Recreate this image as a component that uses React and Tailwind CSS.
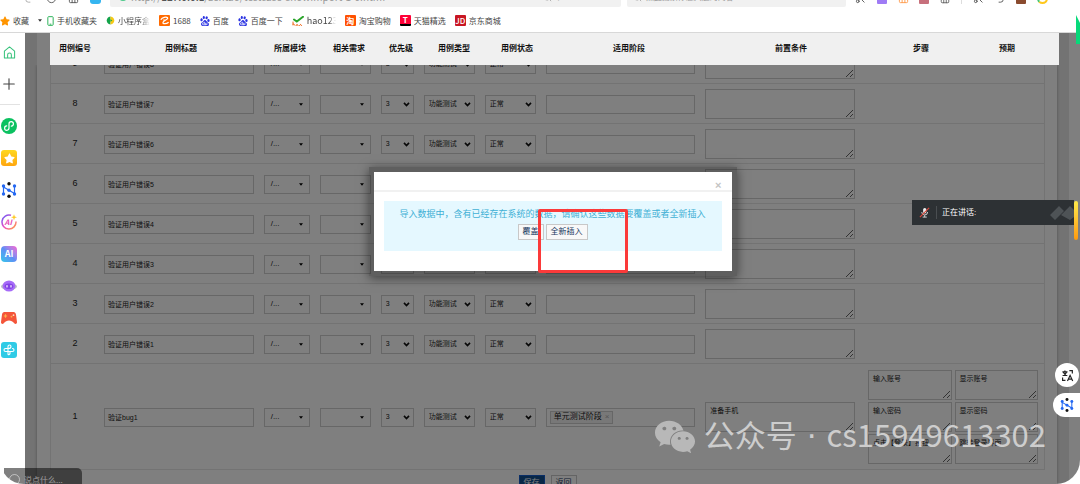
import { useState } from 'react';
import { Home, Plus, RotateCw, Scissors, Search, Undo2 } from 'lucide-react';
import { FaStar, FaWeixin } from 'react-icons/fa';
import { SiBaidu } from 'react-icons/si';

const CASES = [
  { id: 9, title: '验证用户错误8' },
  { id: 8, title: '验证用户错误7' },
  { id: 7, title: '验证用户错误6' },
  { id: 6, title: '验证用户错误5' },
  { id: 5, title: '验证用户错误4' },
  { id: 4, title: '验证用户错误3' },
  { id: 3, title: '验证用户错误2' },
  { id: 2, title: '验证用户错误1' },
  {
    id: 1,
    title: '验证bug1',
    stage: '单元测试阶段',
    precondition: '准备手机',
    steps: [
      ['输入账号', '显示账号'],
      ['输入密码', '显示密码'],
      ['点击【登录】按钮', '跳转登录界面'],
    ],
  },
];

const HEADERS = [
  { label: '用例编号', width: 'w-[50px]' },
  { label: '用例标题', width: '' },
  { label: '所属模块', width: 'w-[56px]' },
  { label: '相关需求', width: 'w-[62px]' },
  { label: '优先级', width: 'w-[42px]' },
  { label: '用例类型', width: 'w-[64px]' },
  { label: '用例状态', width: 'w-[62px]' },
  { label: '适用阶段', width: '' },
  { label: '前置条件', width: '' },
  { label: '步骤', width: 'w-[98px]' },
  { label: '预期', width: 'w-[89px] pr-[15px]' },
];

const FIELD = 'block h-[19px] w-full rounded-none border border-[#cfcfcf] bg-white text-[7px] text-[#222]';
const AREA = 'block h-[30px] w-full resize rounded-none border border-[#cfcfcf] bg-white px-1 py-[3px] text-[7px] leading-[10px] text-[#222]';
const CELL = 'border-b border-[#e6e6e6] px-[5px] pt-[5px] pb-1 align-middle';

function PhoneIcon() {
  return (
    <svg viewBox="0 0 8 12" className="h-[10px] w-[7px]" fill="none" stroke="#2fb35c" strokeWidth="1.2">
      <rect x="0.8" y="0.8" width="6.4" height="10.4" rx="1" />
      <path d="M3 9.8h2" />
    </svg>
  );
}

function LeafIcon() {
  return (
    <svg viewBox="0 0 10 10" className="h-[9px] w-[9px]">
      <path d="M5 .5C2 1 .8 3 .8 5S2 9 5 9.5z" fill="#13a34a" />
      <path d="M5 .5C8 1 9.2 3 9.2 5S8 9 5 9.5z" fill="#f6c915" />
      <path d="M5 3.5l2 1.5-2 1.5z" fill="#13a34a" />
    </svg>
  );
}

function AliIcon() {
  return (
    <svg viewBox="0 0 12 12" className="h-[11px] w-[11px]">
      <rect width="12" height="12" rx="1" fill="#ff6a00" />
      <path d="M2 5.200C3.500 2.500 8 1.500 9.300 3c.8 1.200-1.500 2-3.300 3.200-2 1.400-2.500 3.300.2 3.300 1.800 0 3.300-.8 4.300-1.700" fill="none" stroke="#fff" strokeWidth="1.400" />
      <path d="M4.500 5.500h2" stroke="#fff" />
    </svg>
  );
}

function HaoIcon() {
  return (
    <svg viewBox="0 0 12 10" className="h-[10px] w-[12px]" fill="none" strokeLinecap="round">
      <path d="M2 3.500l2.800 2L11 .8" stroke="#2ba52b" strokeWidth="2" />
      <path d="M1 6v3M1 8q1-1 1.500 1M5 8.500a1 1 0 1 0 .1 0M8.500 8.500a1 1 0 1 0 .1 0" stroke="#f06a1d" strokeWidth="1" />
    </svg>
  );
}

function Badge({ className, children }) {
  return (
    <span className={`flex h-[11px] w-[11px] items-center justify-center rounded-[1px] text-[8px] leading-[9px] font-bold text-white ${className}`}>
      {children}
    </span>
  );
}

function Bookmark({ icon, label, className = '' }) {
  return (
    <a href="#" className="flex shrink-0 items-center gap-[3px]">
      {icon}
      <span className={`overflow-hidden whitespace-nowrap ${className}`}>{label}</span>
    </a>
  );
}

function BrowserBar() {
  return (
    <header className="shrink-0 border-b border-[#d8d8d8] bg-white">
      <div className="flex h-[7px] items-end overflow-hidden pr-8 text-[#555]">
        <div className="flex w-[110px] shrink-0 items-end gap-[11px] pb-[3px] pl-[24px]">
          <Undo2 size={11} className="shrink-0 -scale-x-100 text-[#aaa]" />
          <RotateCw size={11} className="shrink-0" />
          <Home size={11} className="shrink-0" />
          <span className="h-3 w-[11px] shrink-0 rounded-[3px] bg-[#35b5f0]" />
        </div>
        <div className="flex h-5 flex-[514] items-center gap-1 rounded-b-[2px] bg-[#f1f1f1] px-[9px] text-[10px] leading-[14px] text-[#999]">
          <span className="h-2 w-2 rounded-full bg-[#4cc98a]" />
          <span className="flex-1">http://<b className="font-medium text-[#555]">127.0.0.1</b>/zentao/testcase-showImport-1-0.html</span>
          <Search size={9} />
          <span className="w-14">▾</span>
        </div>
        <div className="ml-[6px] flex h-5 flex-[216] items-center gap-1 rounded-b-[2px] bg-[#f1f1f1] px-[6px] text-[8px] text-[#999]">
          <Search size={9} />
          <span>点此搜索你感兴趣的内容</span>
        </div>
        <div className="ml-[9px] flex w-[193px] shrink-0 items-end justify-between pb-[3px]">
          <Scissors size={11} />
          <span className="h-2 w-[10px] rounded-[1px] bg-[#9f7bf5]" />
          <Home size={11} className="text-[#ff9a4a]" />
          <span className="h-2 w-[10px] rounded-[1px] bg-[#c7707c]" />
          <Home size={10} />
          <span className="h-3 w-px bg-[#ddd]" />
          <Scissors size={11} />
          <Undo2 size={11} />
          <span className="h-2 w-[10px] rounded-[1px] bg-[#8a4b2f]" />
          <span className="h-[11px] w-[11px] rounded-full border-2 border-[#ffc81e] border-l-[#48c774]" />
        </div>
      </div>
      <nav className="flex h-[25px] items-center gap-[9px] pt-[2px] text-[8px] leading-[12px] text-[#444]">
        <Bookmark icon={<FaStar size={10} className="text-[#ff9500]" />} label="收藏" />
        <div className="flex items-center gap-[5px]">
          <svg viewBox="0 0 6 4" className="h-[3px] w-1" fill="#333"><path d="M0 0h6L3 4z" /></svg>
          <Bookmark icon={<PhoneIcon />} label="手机收藏夹" />
        </div>
        <Bookmark icon={<LeafIcon />} label="小程序盒" className="w-8 [mask-image:linear-gradient(to_right,black_65%,transparent)]" />
        <Bookmark icon={<AliIcon />} label="1688" />
        <Bookmark icon={<SiBaidu size={10} className="text-[#2a32e1]" />} label="百度" />
        <Bookmark icon={<SiBaidu size={10} className="text-[#2a32e1]" />} label="百度一下" />
        <Bookmark icon={<HaoIcon />} label="hao123" className="w-[29px] text-[9px] [mask-image:linear-gradient(to_right,black_75%,transparent)]" />
        <Bookmark icon={<Badge className="bg-[#ff5000]">淘</Badge>} label="淘宝购物" />
        <Bookmark icon={<Badge className="border-b-2 border-black bg-[#ff0036]">T</Badge>} label="天猫精选" />
        <Bookmark icon={<Badge className="bg-[#c81623] font-medium">JD</Badge>} label="京东商城" />
      </nav>
    </header>
  );
}

function NodesIcon({ className }) {
  return (
    <svg viewBox="0 0 16 16" className={className}>
      <path d="M2.500 4v8M13.500 4v8M2.500 5l11 6.500" stroke="#2468f2" strokeWidth="1.200" />
      <g fill="#2468f2">
        <circle cx="2.500" cy="4" r="1.700" />
        <circle cx="2.500" cy="12" r="1.700" />
        <circle cx="13.500" cy="4" r="1.700" />
        <circle cx="13.500" cy="12" r="1.700" />
        <circle cx="8" cy="8.200" r="1.700" />
      </g>
      <circle cx="8" cy="1.800" r="1.700" fill="#111" />
      <circle cx="8" cy="14.200" r="1.700" fill="#111" />
    </svg>
  );
}

function TranslateIcon() {
  return (
    <svg viewBox="0 0 14 14" className="h-[13px] w-[13px]" fill="none" stroke="#222" strokeWidth="1.300">
      <path d="M1.500 3.200h5.500M4.200 1.500v1.700M6 3.200C5.500 5 4 6.300 1.700 7M2.500 3.500C3.200 5 4.800 6.400 6.800 7" />
      <path d="M7 12.800l2.800-6 2.800 6M8 11h3.600" />
      <path d="M9 1.800h3.200v3M4.800 12.200H1.700v-3" />
    </svg>
  );
}

const TOOLS = [
  {
    name: '小程序',
    icon: (
      <svg viewBox="0 0 16 16" className="h-4 w-4">
        <circle cx="8" cy="8" r="8" fill="#0bc160" />
        <path d="M5.700 7.900A2.200 2.200 0 1 0 8 10.100V5.900a2.200 2.200 0 1 1 2.300 2.200" fill="none" stroke="#fff" strokeWidth="1.200" strokeLinecap="round" />
      </svg>
    ),
  },
  {
    name: '收藏',
    icon: (
      <span className="flex h-4 w-4 items-center justify-center rounded-[3px] bg-linear-to-b from-[#ffd81f] to-[#ffa60f] text-white">
        <FaStar size={11} />
      </span>
    ),
  },
  { name: '导图', icon: <NodesIcon className="h-4 w-4" /> },
  {
    name: 'AI 写作',
    icon: (
      <svg viewBox="0 0 16 16" className="h-4 w-4">
        <defs>
          <linearGradient id="ring" x1="0" y1="0" x2="1" y2="1">
            <stop offset="0" stopColor="#5b5bff" />
            <stop offset="0.5" stopColor="#ee4fc0" />
            <stop offset="1" stopColor="#ffa53a" />
          </linearGradient>
        </defs>
        <path d="M10 1.300A7 7 0 1 0 15 7.500" fill="none" stroke="url(#ring)" strokeWidth="1.500" />
        <path d="M13 .2l.8 2.200 2.200.8-2.200.8-.8 2.200-.8-2.200-2.200-.8 2.200-.8z" fill="#ffc928" />
        <text x="3.600" y="10.800" fontSize="7.500" fontWeight="700" fontStyle="italic" fill="#e44bb5">AI</text>
      </svg>
    ),
  },
  {
    name: 'AI',
    icon: (
      <span className="flex h-4 w-4 items-center justify-center rounded-[4px] bg-linear-to-bl from-[#f45fd2] via-[#5f8df5] to-[#27c6e8] text-[9px] font-bold text-white">
        AI
      </span>
    ),
  },
  {
    name: '助手',
    icon: (
      <svg viewBox="0 0 16 16" className="h-4 w-4">
        <ellipse cx="8" cy="8.500" rx="8" ry="3.500" fill="#b9b9c4" />
        <ellipse cx="8" cy="8" rx="6.300" ry="5.500" fill="#a66bf8" />
        <ellipse cx="8" cy="8.200" rx="4.300" ry="2.800" fill="#8443e6" />
        <path d="M6 7.500v1.500M10 7.500v1.500" stroke="#fff" strokeWidth="1.200" strokeLinecap="round" />
      </svg>
    ),
  },
  {
    name: '游戏',
    icon: (
      <svg viewBox="0 0 16 14" className="h-[14px] w-4">
        <path d="M3.500 1h9C14 1 14.700 2 15 3.500l1 7.500c.2 2-1.600 2.600-2.800 1.200C11.700 10.500 10 9.500 8 9.500s-3.700 1-5.200 2.700C1.600 13.600-.2 13 0 11l1-7.500C1.300 2 2 1 3.500 1z" fill="#f4553a" />
        <path d="M4.500 3.300v3.400M2.800 5h3.400" stroke="#ffb14a" strokeWidth="1.200" />
        <circle cx="10.500" cy="5.700" r=".9" fill="#ffb14a" />
        <circle cx="12.500" cy="4.200" r=".9" fill="#ffd9c0" />
      </svg>
    ),
  },
  {
    name: '插件',
    icon: (
      <svg viewBox="0 0 16 16" className="h-4 w-4">
        <rect width="16" height="16" rx="3" fill="#2fcbe6" />
        <path d="M7 11.500V4.500a1.500 1.500 0 0 1 3 0c0 1.300-1 2-2.500 2H4.500a1.500 1.500 0 1 0 0 3H11.500a1.500 1.500 0 0 0 0-3M9 9.500v2a1.500 1.500 0 0 1-2 1" fill="none" stroke="#fff" strokeWidth="1.100" strokeLinecap="round" />
      </svg>
    ),
  },
];

function Sidebar() {
  return (
    <aside className="w-[25px] shrink-0 bg-white pt-[3px]">
      <div className="flex w-[18px] flex-col items-center">
        <button aria-label="主页" className="flex h-8 items-center text-[#35c27a]">
          <svg viewBox="0 0 14 14" className="h-[13px] w-[13px]" fill="none" stroke="currentColor" strokeWidth="1.100" strokeLinejoin="round">
            <path d="M1.500 5.500L7 1l5.500 4.500v7.500h-11zM5 13V9.500a2 2 0 0 1 4 0V13" />
          </svg>
        </button>
        <button aria-label="添加" className="flex h-8 items-center text-[#444]">
          <Plus size={18} strokeWidth={1.5} />
        </button>
      </div>
      <hr className="mt-1 mb-[5px] w-5 border-[#e2e2e2]" />
      <div className="flex w-[18px] flex-col items-center">
        {TOOLS.map(tool => (
          <button key={tool.name} aria-label={tool.name} className="flex h-8 items-center">{tool.icon}</button>
        ))}
      </div>
    </aside>
  );
}

function Picker({ label, text }) {
  return (
    <button type="button" aria-label={label} className={`${FIELD} flex items-center justify-between px-[6px]`}>
      <span className="text-[8px]">{text}</span>
      <svg viewBox="0 0 6 4" className="h-[3px] w-1" fill="#000"><path d="M0 0h6L3 4z" /></svg>
    </button>
  );
}

function Choice({ label, value }) {
  return (
    <div className="grid items-center">
      <select aria-label={label} className={`${FIELD} col-start-1 row-start-1 appearance-none pl-1`}>
        <option>{value}</option>
      </select>
      <svg viewBox="0 0 8 6" className="pointer-events-none col-start-1 row-start-1 mr-1 h-[5px] w-[7px] justify-self-end" fill="none" stroke="#111" strokeWidth="2">
        <path d="M1 1l3 3.200L7 1" />
      </svg>
    </div>
  );
}

function CaseRow({ item }) {
  return (
    <tr>
      <td className={`${CELL} text-center text-[9px] text-[#222]`}>{item.id}</td>
      <td className={CELL}>
        <input aria-label="用例标题" defaultValue={item.title} className={`${FIELD} px-[3px]`} />
      </td>
      <td className={CELL}><Picker label="所属模块" text="/..." /></td>
      <td className={CELL}><Picker label="相关需求" text="" /></td>
      <td className={CELL}><Choice label="优先级" value="3" /></td>
      <td className={CELL}><Choice label="用例类型" value="功能测试" /></td>
      <td className={CELL}><Choice label="用例状态" value="正常" /></td>
      <td className={CELL}>
        <div className={`${FIELD} flex items-center pl-[3px]`}>
          {item.stage && (
            <span className="flex h-[13px] shrink-0 items-center gap-[3px] border border-[#ccc] bg-[#f1f1f1] px-[3px] text-[8px]">
              {item.stage}
              <button type="button" aria-label="移除" className="text-[#aaa]">×</button>
            </span>
          )}
          <input aria-label="适用阶段" className="w-0 flex-1 outline-none" />
        </div>
      </td>
      <td className={CELL}>
        <textarea aria-label="前置条件" defaultValue={item.precondition} className={AREA} />
      </td>
      <td className={CELL}>
        {item.steps && (
          <div className="grid grid-cols-2 gap-x-[3px] gap-y-[2px] py-px pr-px pl-[3px]">
            {item.steps.flat().map((text, i) => (
              <textarea key={text} aria-label={i % 2 ? '预期' : '步骤'} defaultValue={text} className={AREA} />
            ))}
          </div>
        )}
      </td>
    </tr>
  );
}

function CaseTable() {
  return (
    <table className="-mt-[21px] w-full table-fixed border-separate border-spacing-0 border-x border-[#e6e6e6]">
      <colgroup>
        <col className="w-12" />
        <col />
        <col className="w-[56px]" />
        <col className="w-[61px]" />
        <col className="w-[43px]" />
        <col className="w-[61px]" />
        <col className="w-[61px]" />
        <col />
        <col />
        <col className="w-[184px]" />
      </colgroup>
      <tbody>
        {CASES.map(item => <CaseRow key={item.id} item={item} />)}
      </tbody>
    </table>
  );
}

function ImportDialog({ onClose }) {
  return (
    <div role="dialog" aria-label="导入确认" className="absolute top-[134px] left-1/2 z-20 w-[368px] -translate-x-1/2 bg-black/25 p-[5px] shadow-[0_2px_10px_rgba(0,0,0,0.5)]">
      <div className="bg-white pb-5">
        <div className="flex h-5 items-end justify-end border-b-2 border-[#f1f1f1] pr-[10px]">
          <button type="button" aria-label="关闭" onClick={onClose} className="text-[11px] leading-[9px] font-bold text-[#c4c4c4]">×</button>
        </div>
        <div className="mx-[10px] mt-[9px] flex h-[50px] flex-col items-center bg-[#e5f8ff] pt-[7px]">
          <p className="text-[9px] leading-[13px] whitespace-nowrap text-[#3fb0d5]">导入数据中，含有已经存在系统的数据，请确认这些数据要覆盖或者全新插入</p>
          <div className="mt-[3px] flex gap-[2px] text-[8px] leading-[14px] text-[#17375e]">
            <button type="button" className="border border-[#c8c8c8] bg-[#f8f8f8] px-1">覆盖</button>
            <button type="button" className="border border-[#c8c8c8] bg-[#f8f8f8] px-1">全新插入</button>
          </div>
        </div>
      </div>
    </div>
  );
}

function SpeakerBar() {
  return (
    <div className="absolute top-[167px] right-[6px] z-20 flex h-[25px] w-[162px] items-center bg-[#2d3134] pl-[7px] text-[8px] text-white">
      <svg viewBox="0 0 12 12" className="h-[11px] w-[11px]">
        <rect x="4.500" y="1" width="3.500" height="6" rx="1.700" fill="#eee" />
        <path d="M3 5.500a3.200 3.200 0 0 0 6.400 0M6.200 9v2M4 11h4.500" fill="none" stroke="#ddd" />
        <path d="M1 11L11 1" stroke="#e0483a" strokeWidth="1.200" />
      </svg>
      <span className="mr-[5px] ml-[6px] h-[13px] w-px bg-[#4a4e51]" />
      <span className="flex-1">正在讲话:</span>
      <svg viewBox="0 0 24 16" className="h-4 w-6" fill="#4e5356">
        <path d="M0 10L9 1l5 5-9 9zM11 10l9-9 4 4v7l-4 3z" />
      </svg>
    </div>
  );
}

function Watermark() {
  return (
    <div className="pointer-events-none absolute right-[34px] bottom-[22px] z-30 flex items-center gap-2 text-[31px] leading-[44px] text-[#cdcdcd]">
      <FaWeixin size={42} className="text-[#b8b8b8]" />
      <span className="pb-1 whitespace-pre">公众号<span className="font-['DejaVu_Sans',sans-serif]"> · </span>cs15949613302</span>
    </div>
  );
}

export default function App() {
  const [open, setOpen] = useState(true);

  return (
    <div className="relative flex h-screen flex-col overflow-hidden rounded-b-[24px] bg-white font-['Noto_Sans_CJK_SC',sans-serif]">
      <BrowserBar />

      <div className="flex min-h-0 flex-1">
        <Sidebar />
        <main className="relative flex min-w-0 flex-1 flex-col font-['Liberation_Sans','Noto_Sans_CJK_SC',sans-serif]">
          {/* Fixed column titles stay above the mask */}
          <div className="mr-[11px] h-8 shrink-0 bg-[#e6e6e6] px-3">
            <div className="bg-white pl-[13px]">
              <div className="relative z-10 -mr-[2px] bg-[#f0f0f0]">
                <table className="h-8 w-full table-fixed text-[8px] text-[#111]">
                  <thead>
                    <tr>
                      {HEADERS.map(h => <th key={h.label} scope="col" className={`p-0 font-bold ${h.width}`}>{h.label}</th>)}
                    </tr>
                  </thead>
                </table>
              </div>
            </div>
          </div>

          <div className="mr-[11px] min-h-0 flex-1 overflow-hidden bg-[#e6e6e6] px-3">
            <div className="h-full overflow-hidden bg-white pr-3 pl-[13px] shadow-[0_0_3px_rgba(0,0,0,0.3)]">
              <CaseTable />
              <div className="mt-[5px] flex justify-center gap-[6px] text-[8px] leading-[14px]">
                <button type="button" className="border border-[#145ccd] bg-[#114f8e] px-1 text-white">保存</button>
                <button type="button" className="border border-[#c8c8c8] bg-white px-1 text-[#17375e]">返回</button>
              </div>
            </div>
          </div>

          <div className="absolute inset-0 bg-black/50" />
          {open && <ImportDialog onClose={() => setOpen(false)} />}
          <SpeakerBar />
          <span className="absolute top-[168px] right-[2px] z-20 h-[39px] w-1 rounded-full bg-linear-to-b from-[#ffe94a] to-[#ff9a0a]" />

          <button type="button" aria-label="翻译" className="absolute top-[330px] right-px z-20 flex h-6 w-6 items-center justify-center rounded-full bg-white">
            <TranslateIcon />
          </button>
          <button type="button" aria-label="导图" className="absolute top-[360px] right-0 z-20 flex h-6 w-[27px] items-center rounded-l-full bg-white pl-[7px]">
            <NodesIcon className="h-[14px] w-[14px]" />
          </button>
        </main>
      </div>

      <Watermark />

      {/* Marked area of the dialog */}
      <div className="pointer-events-none absolute top-[209px] left-1/2 z-30 -ml-[2px] h-[64px] w-[90px] rounded-[2px] border-3 border-[#fb3a3a]" />
      <svg viewBox="0 0 4 29" className="absolute top-[15px] right-0 z-30 h-[29px] w-1" fill="#07d97a"><path d="M0 0l4 8v21H0z" /></svg>

      {/* Chat box */}
      <div className="absolute bottom-0 left-[4px] z-30 flex h-4 w-[78px] items-start gap-1 overflow-hidden rounded-tr-[5px] bg-black/50 pt-[6px] pl-1 text-[8px] leading-[12px] text-white/50">
        <span className="ml-px h-[11px] w-[11px] shrink-0 rounded-full border border-white/50" />
        <span>说点什么...</span>
      </div>
    </div>
  );
}
